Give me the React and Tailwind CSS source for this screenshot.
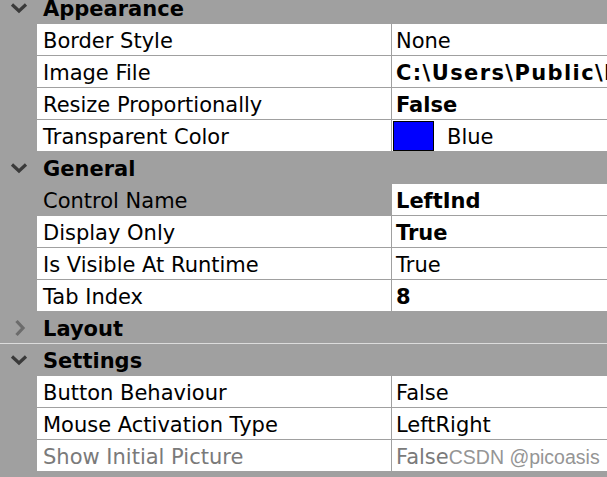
import React from "react";

const GRAY = "bg-[#a0a0a0]";

const sections = [
  {
    title: "Appearance",
    open: true,
    rows: [
      { name: "Border Style", value: "None" },
      { name: "Image File", value: "C:\\Users\\Public\\Pictures\\LeftInd.bmp", bold: true, wide: true },
      { name: "Resize Proportionally", value: "False", bold: true },
      { name: "Transparent Color", value: "Blue", swatch: true },
    ],
  },
  {
    title: "General",
    open: true,
    rows: [
      { name: "Control Name", value: "LeftInd", bold: true, selected: true },
      { name: "Display Only", value: "True", bold: true },
      { name: "Is Visible At Runtime", value: "True" },
      { name: "Tab Index", value: "8", bold: true },
    ],
  },
  { title: "Layout", open: false, rows: [] },
  {
    title: "Settings",
    open: true,
    rows: [
      { name: "Button Behaviour", value: "False" },
      { name: "Mouse Activation Type", value: "LeftRight" },
      { name: "Show Initial Picture", value: "False", disabled: true },
    ],
  },
];

function Chevron({ open }) {
  if (open) {
    return (
      <svg width="20" height="12" viewBox="0 0 20 12" className="shrink-0">
        <path d="M3 2.5 L10 9 L17 2.5" fill="none" stroke="#3a3a3a" strokeWidth="3.2" />
      </svg>
    );
  }
  return (
    <svg width="12" height="20" viewBox="0 0 12 20" className="shrink-0 ml-[2px]">
      <path d="M2.5 3 L9 10 L2.5 17" fill="none" stroke="#6c6c6c" strokeWidth="3.2" />
    </svg>
  );
}

function Header({ title, open, light }) {
  return (
    <div className={`flex h-[32px] flex-col ${GRAY}`}>
      <div className="flex h-[31px] items-center">
        <div className="flex w-[37px] justify-center pl-[1px]">
          <Chevron open={open} />
        </div>
        <span className="pl-[6px] pt-[4px] text-[21px] font-bold text-black">{title}</span>
      </div>
      <div className={`h-px ${light ? "bg-[#dcdcdc]" : GRAY}`} />
    </div>
  );
}

function Row({ name, value, bold, wide, swatch, selected, disabled }) {
  const text = disabled ? "text-[#7a7a7a]" : "text-black";
  return (
    <div className={`flex h-[32px] flex-col ${GRAY}`}>
      <div className="flex h-[31px]">
        <div className="w-[37px] shrink-0" />
        <div className={`flex w-[354px] shrink-0 items-center pl-[6px] pt-[4px] ${selected ? GRAY : "bg-white"} ${text}`}>
          {name}
        </div>
        <div className={`w-px shrink-0 ${GRAY}`} />
        <div className={`flex min-w-0 flex-1 items-center overflow-hidden whitespace-nowrap bg-white ${text}`}>
          {swatch ? (
            <>
              <span className="ml-[1px] h-[30px] w-[41px] shrink-0 border border-black bg-[#0000ff]" />
              <span className="pl-[13px] pt-[4px]">{value}</span>
            </>
          ) : (
            <span className={`pl-[4px] pt-[4px] ${bold ? "font-bold" : ""} ${wide ? "tracking-[1.4px]" : ""}`}>{value}</span>
          )}
          {disabled && (
            <span className="pt-[4px] text-[19.5px] text-[#959595] [font-family:'Liberation_Sans',sans-serif]">CSDN @picoasis</span>
          )}
        </div>
      </div>
      <div className={`h-px ${GRAY}`} />
    </div>
  );
}

export default function App() {
  return (
    <div className={`h-[477px] w-[607px] overflow-hidden ${GRAY} [font-family:'DejaVu_Sans',sans-serif] text-[21px] leading-none`}>
      <div className="-mt-[8px]">
        {sections.map((s) => (
          <div key={s.title}>
            <Header title={s.title} open={s.open} light={!s.open} />
            {s.rows.map((r) => (
              <Row key={r.name} {...r} />
            ))}
          </div>
        ))}
      </div>
    </div>
  );
}
